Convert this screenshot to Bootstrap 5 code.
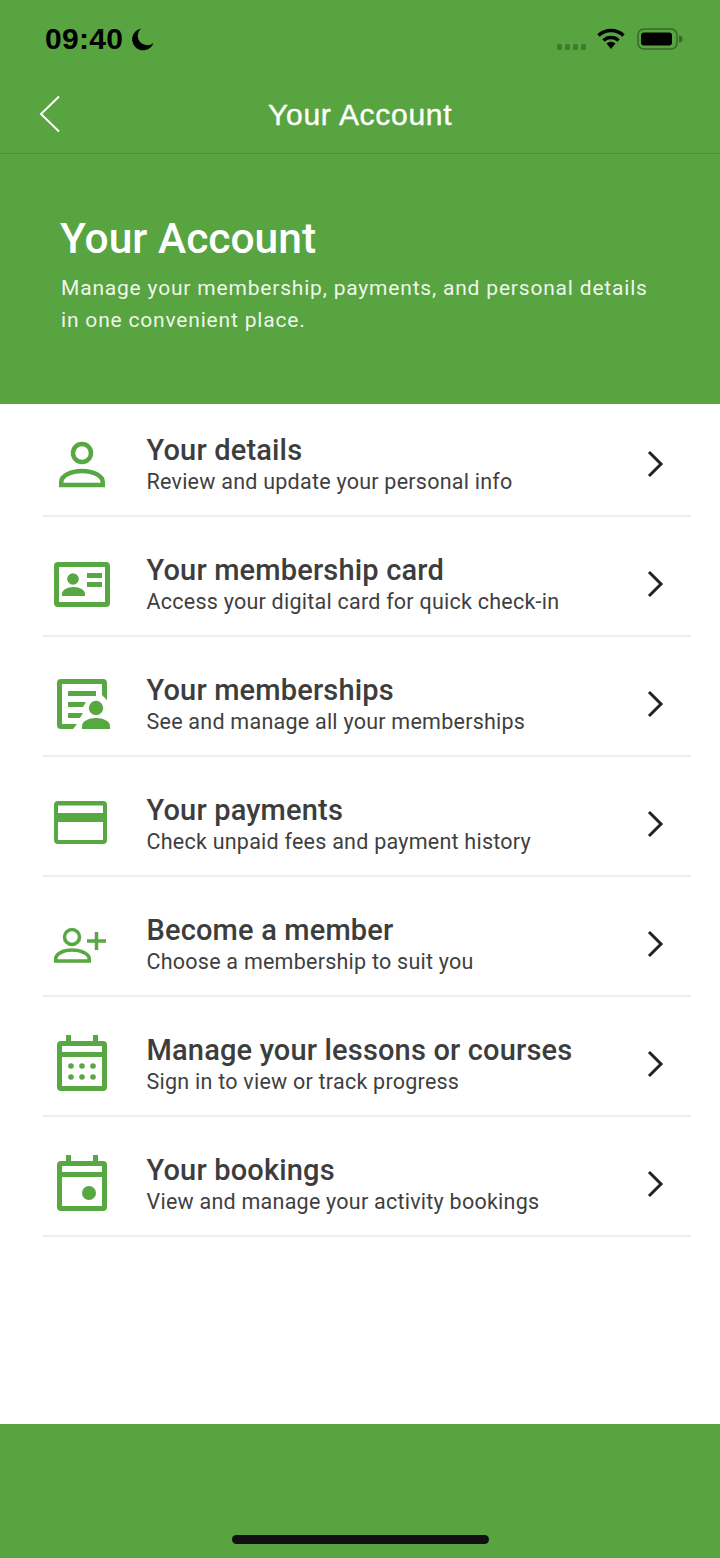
<!DOCTYPE html>
<html lang="en">
<head>
  <meta charset="UTF-8">
  <meta name="viewport" content="width=device-width, initial-scale=1.0">
  <title>Your Account</title>
  <link href="https://cdn.jsdelivr.net/npm/bootstrap@5.3.3/dist/css/bootstrap.min.css" rel="stylesheet">
  <style>
    html, body {
      height: 100%;
    }

    body {
      background: #fff;
      font-family: Roboto, sans-serif;
    }

    .page-wrap {
      height: 1558px;
    }

    .top-bar {
      background: #57a440;
      height: 154px;
      border-bottom: 1px solid #4b9137;
    }

    .status-row {
      height: 78px;
      padding: 0 37px 0 45px;
    }

    .clock {
      font-family: "Liberation Sans", sans-serif;
      font-size: 30px;
      font-weight: 700;
      color: #000;
      line-height: 1;
      letter-spacing: .3px;
    }

    .title-row {
      height: 73px;
      padding: 0 38px;
    }

    .back-cell {
      width: 220px;
      flex: none;
    }

    .bar-title {
      font-family: "Liberation Sans", sans-serif;
      font-size: 30px;
      font-weight: 400;
      color: #fff;
      line-height: 1;
      letter-spacing: .72px;
      -webkit-text-stroke: .4px #fff;
      margin-left: 10px;
    }

    .hero-block {
      background: #57a440;
      height: 250px;
      padding: 59px 60px 0 60px;
      color: #fff;
    }

    .hero-title {
      font-size: 42.500px;
      font-weight: 500;
      line-height: 52px;
      margin: 0 0 7px;
    }

    .hero-text {
      font-size: 21px;
      line-height: 32px;
      letter-spacing: .81px;
      color: #eef6ec;
      margin: 0;
      padding-left: 1px;
    }

    .menu-list {
      padding: 0 29px 0 43px;
    }

    .menu-item {
      height: 120px;
      padding-top: 16px;
      border-bottom: 2px solid #eeeeee;
      color: #333;
      text-decoration: none;
    }

    .menu-item:first-child {
      height: 113px;
      padding-top: 9px;
    }

    .icon-cell {
      width: 103.500px;
      flex: none;
    }

    .icon-cell svg {
      display: block;
    }

    .item-title {
      font-size: 29px;
      font-weight: 500;
      line-height: 35px;
      color: #3d3d3d;
      letter-spacing: .17px;
    }

    .item-sub {
      font-size: 21.500px;
      line-height: 28px;
      color: #3f3f3f;
      letter-spacing: .24px;
    }

    .bottom-bar {
      background: #57a440;
      height: 134px;
      padding-bottom: 14px;
    }

    .home-line {
      width: 257px;
      height: 9px;
      border-radius: 5px;
      background: #111;
    }
  </style>
</head>
<body>

  <div class="page-wrap d-flex flex-column">
    <div class="top-bar">
      <div class="status-row d-flex align-items-center justify-content-between">
        <div class="d-flex align-items-center gap-2">
          <span class="clock">09:40</span>
          <svg width="24" height="24" viewBox="0 0 24 24"><path d="M10 1.500A11 11 0 1 0 22.500 16 9.500 9.500 0 0 1 10 1.500z" fill="#000"/></svg>
        </div>
        <div class="d-flex align-items-center">
          <svg width="33" height="8" viewBox="0 0 33 8" class="me-2 mt-3"><g fill="#3f7a2f"><rect x="1" y="1" width="5" height="6" rx="1.500"/><rect x="9" y="1" width="5" height="6" rx="1.500"/><rect x="17" y="1" width="5" height="6" rx="1.500"/><rect x="25" y="1" width="5" height="6" rx="1.500"/></g></svg>
          <svg width="28" height="22" viewBox="0 0 28 22" class="me-2"><g fill="none" stroke="#000" stroke-width="3.400"><path d="M1.500 7.500a18 18 0 0 1 25 0"/><path d="M6.500 12.500a11 11 0 0 1 15 0"/></g><path d="M9.500 15.500a6.500 6.500 0 0 1 9 0L14 21z" fill="#000"/></svg>
          <svg width="46" height="22" viewBox="0 0 46 22" class="ms-1"><rect x="1" y="1" width="39" height="20" rx="6" fill="none" stroke="#38682b" stroke-width="1.500"/><rect x="4" y="4.500" width="31" height="13" rx="3" fill="#000"/><path d="M42 7.500v7a3.500 3.500 0 0 0 0-7z" fill="#38682b"/></svg>
        </div>
      </div>
      <div class="title-row d-flex align-items-center">
        <div class="back-cell">
          <svg width="24" height="38" viewBox="0 0 24 38" class="d-block"><path d="M21 .5 3 18l18 17.500" fill="none" stroke="#fff" stroke-width="2"/></svg>
        </div>
        <span class="bar-title">Your Account</span>
      </div>
    </div>

    <div class="hero-block">
      <h1 class="hero-title">Your Account</h1>
      <p class="hero-text">Manage your membership, payments, and personal details in one convenient place.</p>
    </div>

    <div class="menu-list flex-grow-1">
      <a class="menu-item d-flex align-items-center" href="#">
        <div class="icon-cell">
          <svg width="66" height="60" viewBox="0 0 66 60"><g fill="none" stroke="#57a842" stroke-width="4.500"><circle cx="39" cy="19" r="9"/><path d="M18.250 51v-3c0-6 9-11 20.750-11s20.750 5 20.750 11v3z"/></g></svg>
        </div>
        <div class="flex-grow-1">
          <div class="item-title">Your details</div>
          <div class="item-sub">Review and update your personal info</div>
        </div>
        <svg width="22" height="30" viewBox="0 0 22 30" class="me-4"><path d="M4 3l12 12L4 27" fill="none" stroke="#222" stroke-width="3"/></svg>
      </a>
      <a class="menu-item d-flex align-items-center" href="#">
        <div class="icon-cell">
          <svg width="70" height="48" viewBox="0 0 70 48"><g fill="#57a842"><path fill-rule="evenodd" d="M15 2h48a4 4 0 0 1 4 4v37a4 4 0 0 1-4 4H15a4 4 0 0 1-4-4V6a4 4 0 0 1 4-4zm1 5v35h46V7z"/><circle cx="30" cy="19" r="5.800"/><path d="M19 36v-2c0-4 5-7 11.500-7S42 30 42 34v2z"/><rect x="44" y="13" width="15" height="5"/><rect x="44" y="22" width="15" height="5"/></g></svg>
        </div>
        <div class="flex-grow-1">
          <div class="item-title">Your membership card</div>
          <div class="item-sub">Access your digital card for quick check-in</div>
        </div>
        <svg width="22" height="30" viewBox="0 0 22 30" class="me-4"><path d="M4 3l12 12L4 27" fill="none" stroke="#222" stroke-width="3"/></svg>
      </a>
      <a class="menu-item d-flex align-items-center" href="#">
        <div class="icon-cell">
          <svg width="70" height="52" viewBox="0 0 70 52"><g fill="#57a842"><path d="M18 1h42a4 4 0 0 1 4 4v17l-5-5V6H19v40h15l-4 5H18a4 4 0 0 1-4-4V5a4 4 0 0 1 4-4z"/><rect x="25" y="13" width="28" height="5"/><path d="M25 24h18l-3 5H25zM25 35h15l-3 5H25z"/><circle cx="53" cy="30" r="7.200"/><path d="M39 51v-3c0-5 7-8 14-8s14 3 14 8v3z"/></g></svg>
        </div>
        <div class="flex-grow-1">
          <div class="item-title">Your memberships</div>
          <div class="item-sub">See and manage all your memberships</div>
        </div>
        <svg width="22" height="30" viewBox="0 0 22 30" class="me-4"><path d="M4 3l12 12L4 27" fill="none" stroke="#222" stroke-width="3"/></svg>
      </a>
      <a class="menu-item d-flex align-items-center" href="#">
        <div class="icon-cell">
          <svg width="66" height="46" viewBox="0 0 66 46"><path fill="#57a842" fill-rule="evenodd" d="M15 0h45a4 4 0 0 1 4 4v35a4 4 0 0 1-4 4H15a4 4 0 0 1-4-4V4a4 4 0 0 1 4-4zm0 4.500V12h45V4.500zM15 21v18h45V21z"/></svg>
        </div>
        <div class="flex-grow-1">
          <div class="item-title">Your payments</div>
          <div class="item-sub">Check unpaid fees and payment history</div>
        </div>
        <svg width="22" height="30" viewBox="0 0 22 30" class="me-4"><path d="M4 3l12 12L4 27" fill="none" stroke="#222" stroke-width="3"/></svg>
      </a>
      <a class="menu-item d-flex align-items-center" href="#">
        <div class="icon-cell">
          <svg width="66" height="42" viewBox="0 0 66 42"><g fill="none" stroke="#57a842" stroke-width="3.500"><circle cx="29" cy="14" r="7.500"/><path d="M12.750 38v-2c0-5 7-9 16.250-9s17.250 4 17.250 9v2z"/><path d="M44 18h19M53.500 9v18"/></g></svg>
        </div>
        <div class="flex-grow-1">
          <div class="item-title">Become a member</div>
          <div class="item-sub">Choose a membership to suit you</div>
        </div>
        <svg width="22" height="30" viewBox="0 0 22 30" class="me-4"><path d="M4 3l12 12L4 27" fill="none" stroke="#222" stroke-width="3"/></svg>
      </a>
      <a class="menu-item d-flex align-items-center" href="#">
        <div class="icon-cell">
          <svg width="66" height="58" viewBox="0 0 66 58"><g fill="#57a842"><path fill-rule="evenodd" d="M23 0h5v6h22V0h5v6h5a4 4 0 0 1 4 4v42a4 4 0 0 1-4 4H18a4 4 0 0 1-4-4V10a4 4 0 0 1 4-4h5zM19 11v6h40v-6zm0 11v29h40V22z"/><circle cx="28" cy="31" r="2.800"/><circle cx="39" cy="31" r="2.800"/><circle cx="50" cy="31" r="2.800"/><circle cx="28" cy="42" r="2.800"/><circle cx="39" cy="42" r="2.800"/><circle cx="50" cy="42" r="2.800"/></g></svg>
        </div>
        <div class="flex-grow-1">
          <div class="item-title">Manage your lessons or courses</div>
          <div class="item-sub">Sign in to view or track progress</div>
        </div>
        <svg width="22" height="30" viewBox="0 0 22 30" class="me-4"><path d="M4 3l12 12L4 27" fill="none" stroke="#222" stroke-width="3"/></svg>
      </a>
      <a class="menu-item d-flex align-items-center" href="#">
        <div class="icon-cell">
          <svg width="66" height="58" viewBox="0 0 66 58"><g fill="#57a842"><path fill-rule="evenodd" d="M23 0h5v6h22V0h5v6h5a4 4 0 0 1 4 4v42a4 4 0 0 1-4 4H18a4 4 0 0 1-4-4V10a4 4 0 0 1 4-4h5zM19 11v6h40v-6zm0 11v29h40V22z"/><circle cx="46" cy="38" r="7"/></g></svg>
        </div>
        <div class="flex-grow-1">
          <div class="item-title">Your bookings</div>
          <div class="item-sub">View and manage your activity bookings</div>
        </div>
        <svg width="22" height="30" viewBox="0 0 22 30" class="me-4"><path d="M4 3l12 12L4 27" fill="none" stroke="#222" stroke-width="3"/></svg>
      </a>
    </div>

    <div class="bottom-bar d-flex align-items-end justify-content-center">
      <div class="home-line"></div>
    </div>
  </div>

  <script src="https://cdn.jsdelivr.net/npm/bootstrap@5.3.3/dist/js/bootstrap.bundle.min.js"></script>
</body>
</html>
